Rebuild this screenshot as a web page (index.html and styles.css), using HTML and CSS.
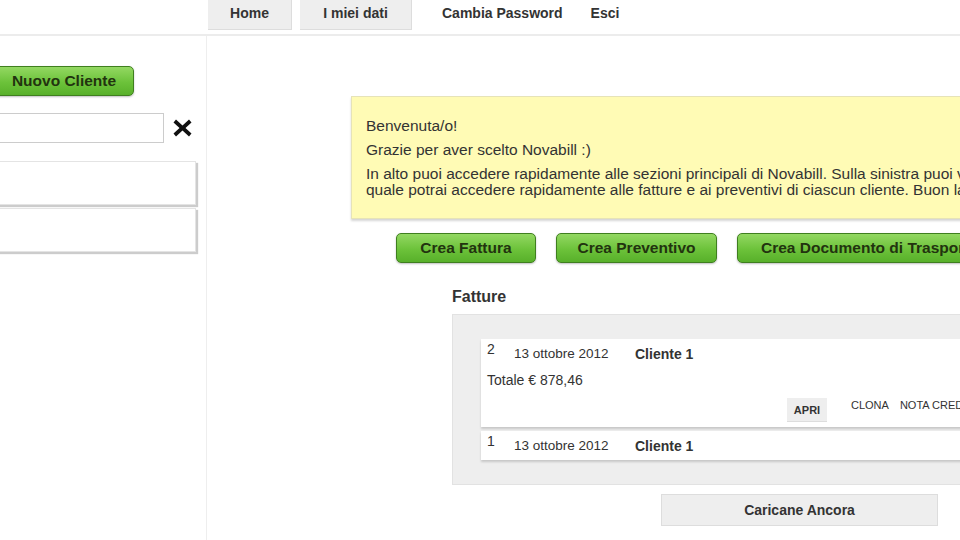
FILE: index.html
```html
<!DOCTYPE html>
<html lang="it">
<head>
<meta charset="utf-8">
<title>Novabill</title>
<link rel="stylesheet" href="styles.css">
</head>
<body>
<header class="topbar">
  <nav class="nav">
    <a class="tab tab-home">Home</a>
    <a class="tab tab-data">I miei dati</a>
    <a class="link link-pwd">Cambia Password</a>
    <a class="link link-exit">Esci</a>
  </nav>
</header>
<div class="layout">
  <aside class="sidebar">
    <button class="btn-green btn-new">Nuovo Cliente</button>
    <div class="search-row">
      <input class="search" type="text">
      <svg class="clear" width="21" height="20" viewBox="0 0 21 20"><path d="M4 1.5 L10.5 7.5 L17 1.5 L19.5 4.5 L13.5 10 L19.5 15.5 L17 18.5 L10.5 12.5 L4 18.5 L1.5 15.5 L7.5 10 L1.5 4.5 Z" fill="#111"/></svg>
    </div>
    <div class="client-item"></div>
    <div class="client-item"></div>
  </aside>
  <main class="main">
    <div class="welcome">
      <p>Benvenuta/o!</p>
      <p>Grazie per aver scelto Novabill :)</p>
      <p>In alto puoi accedere rapidamente alle sezioni principali di Novabill. Sulla sinistra puoi vedere la lista dei tuoi clienti, attraverso la<br>quale potrai accedere rapidamente alle fatture e ai preventivi di ciascun cliente. Buon lavoro!</p>
    </div>
    <div class="actions">
      <button class="btn-green btn-action btn-invoice">Crea Fattura</button>
      <button class="btn-green btn-action btn-quote">Crea Preventivo</button>
      <button class="btn-green btn-action">Crea Documento di Trasporto</button>
    </div>
    <section class="invoices">
      <h2 class="invoices-title">Fatture</h2>
      <div class="invoice-box">
        <div class="invoice-card">
          <div class="inv-head">
            <span class="inv-num">2</span>
            <span class="inv-date">13 ottobre 2012</span>
            <span class="inv-client">Cliente 1</span>
          </div>
          <div class="inv-total">Totale € 878,46</div>
          <div class="inv-actions">
            <button class="btn-open">APRI</button>
            <span class="inv-link link-clone">CLONA</span>
            <span class="inv-link link-credit">NOTA CREDITO</span>
          </div>
        </div>
        <div class="invoice-card">
          <div class="inv-head">
            <span class="inv-num">1</span>
            <span class="inv-date">13 ottobre 2012</span>
            <span class="inv-client">Cliente 1</span>
          </div>
        </div>
      </div>
      <button class="btn-more">Caricane Ancora</button>
    </section>
  </main>
</div>
</body>
</html>
```
FILE: styles.css
```css
html, body {
  margin: 0;
  padding: 0;
}
body {
  width: 960px;
  height: 540px;
  overflow: hidden;
  background: #fff;
  font-family: "Liberation Sans", Arial, sans-serif;
  color: #333;
  font-size: 14px;
}
button {
  font-family: "Liberation Sans", Arial, sans-serif;
  cursor: pointer;
}

/* top bar */
.topbar {
  height: 34px;
  border-bottom: 2px solid #ececec;
}
.nav {
  display: flex;
  align-items: flex-start;
  padding-left: 208px;
}
.nav a {
  font-weight: bold;
  font-size: 14px;
  color: #333;
  line-height: 26px;
}
.tab {
  display: block;
  height: 30px;
  box-sizing: border-box;
  background: #eee;
  border-right: 1px solid #ddd;
  border-bottom: 1px solid #ddd;
  text-align: center;
}
.tab-home { width: 84px; }
.tab-data { width: 112px; margin-left: 8px; }
.link-pwd { margin-left: 30px; }
.link-exit { margin-left: 28px; }

/* layout */
.layout {
  display: flex;
  height: 504px;
}
.sidebar {
  width: 206px;
  flex: none;
  border-right: 1px solid #eee;
  padding-top: 30px;
}
.btn-green {
  height: 30px;
  border: 1px solid #3f7f1f;
  border-radius: 5px;
  background: linear-gradient(#93d862, #6cc23a 55%, #58b02a);
  color: #22330f;
  font-weight: bold;
  font-size: 15.5px;
  box-shadow: 0 1px 2px rgba(0,0,0,0.25);
  padding: 0 23px;
  white-space: nowrap;
}
.btn-new {
  display: block;
  margin-left: -6px;
  width: 140px;
  padding: 0;
}
.search-row {
  display: flex;
  align-items: center;
  margin-top: 17px;
}
.search {
  margin-left: -20px;
  width: 184px;
  height: 30px;
  box-sizing: border-box;
  border: 1px solid #ccc;
  padding: 0 6px;
}
.clear {
  margin-left: 8px;
}
.client-item {
  margin-left: -20px;
  width: 216px;
  height: 44px;
  box-sizing: border-box;
  border: 1px solid #e4e4e4;
  box-shadow: 2px 2px 1px #ccc;
  background: #fff;
  margin-top: 3px;
}
.search-row + .client-item {
  margin-top: 18px;
}

/* main */
.main {
  flex: none;
  width: 900px;
  padding-top: 60px;
}
.welcome {
  margin-left: 144px;
  width: 720px;
  background: #fffbb5;
  border: 1px solid #e6e3b8;
  box-shadow: 0 2px 2px #d6d6d6;
  padding: 13px 14px 12px;
  font-size: 15.5px;
}
.welcome p {
  margin: 8px 0;
  line-height: 16px;
  white-space: nowrap;
}
.actions {
  display: flex;
  gap: 20px;
  margin-left: 189px;
  margin-top: 14px;
}
.btn-invoice {
  width: 140px;
  padding: 0;
}
.btn-quote {
  width: 161px;
  padding: 0;
}
.invoices {
  margin-left: 245px;
}
.invoices-title {
  font-size: 16px;
  font-weight: bold;
  margin: 25px 0 0;
  line-height: 18px;
  height: 26px;
}
.invoice-box {
  width: 560px;
  background: #eee;
  border: 1px solid #e2e2e2;
  padding: 24px 0 24px 28px;
}
.invoice-card {
  background: #fff;
  width: 540px;
  box-shadow: 0 2px 2px #c8c8c8;
  margin-bottom: 4px;
}
.invoice-card:last-child {
  margin-bottom: 0;
}
.inv-head {
  display: flex;
  align-items: flex-start;
  height: 29px;
  padding-left: 6px;
}
.inv-num {
  font-size: 14px;
  margin-top: 2px;
  width: 27px;
}
.inv-date {
  margin-top: 7px;
  width: 121px;
  font-size: 13.5px;
}
.inv-client {
  margin-top: 7px;
  font-weight: bold;
}
.inv-total {
  padding-left: 6px;
  line-height: 16px;
  margin-top: 4px;
}
.inv-actions {
  display: flex;
  align-items: flex-start;
  padding-left: 306px;
  margin-top: 7px;
  height: 32px;
}
.btn-open {
  width: 40px;
  height: 24px;
  border: 0;
  background: #eee;
  border-bottom: 1px solid #ddd;
  font-weight: bold;
  font-size: 11px;
  color: #333;
  padding: 0;
  margin-top: 3px;
}
.inv-link {
  font-size: 11px;
  line-height: 13px;
  color: #333;
  margin-top: 4px;
}
.link-clone {
  margin-left: 24px;
}
.link-credit {
  margin-left: 11px;
}
.btn-more {
  display: block;
  margin: 9px 0 0 209px;
  width: 277px;
  height: 32px;
  background: #eee;
  border: 1px solid #ddd;
  font-weight: bold;
  font-size: 14px;
  color: #333;
}
```
